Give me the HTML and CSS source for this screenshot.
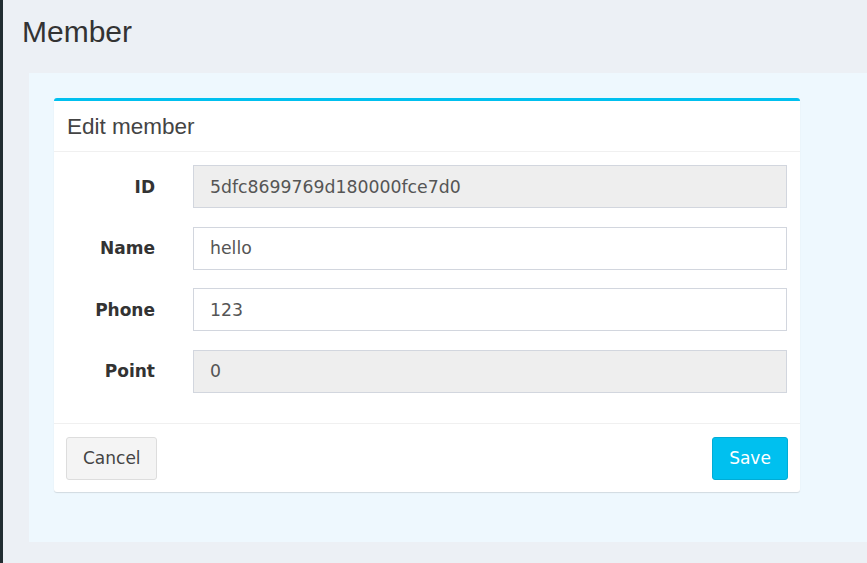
FILE: index.html
```html
<!DOCTYPE html>
<html>
<head>
<meta charset="utf-8">
<link rel="stylesheet" href="styles.css">
</head>
<body>
<div class="layout">
  <div class="sidebar"></div>
  <main class="main">
    <h1 class="page-title">Member</h1>
    <section class="content">
      <div class="card">
        <div class="card-header">Edit member</div>
        <form class="card-body">
          <div class="row">
            <label class="label">ID</label>
            <input class="field" type="text" value="5dfc8699769d180000fce7d0" disabled>
          </div>
          <div class="row">
            <label class="label">Name</label>
            <input class="field" type="text" value="hello">
          </div>
          <div class="row">
            <label class="label">Phone</label>
            <input class="field" type="text" value="123">
          </div>
          <div class="row">
            <label class="label">Point</label>
            <input class="field" type="text" value="0" disabled>
          </div>
        </form>
        <div class="card-footer">
          <button class="btn btn-default" type="button">Cancel</button>
          <button class="btn btn-primary" type="button">Save</button>
        </div>
      </div>
    </section>
  </main>
</div>
</body>
</html>
```
FILE: styles.css
```css
html, body {
  margin: 0;
  padding: 0;
  height: 100%;
  overflow: hidden;
}
body {
  background: #ecf0f5;
  font-family: "Liberation Sans", Arial, sans-serif;
  color: #333;
}
.layout {
  display: flex;
  height: 100%;
}
.sidebar {
  width: 3px;
  flex: none;
  background: #222d32;
}
.main {
  flex: 1;
  min-width: 0;
  display: flex;
  flex-direction: column;
}
.page-title {
  margin: 0;
  padding: 14px 0 0 19px;
  height: 73px;
  box-sizing: border-box;
  font-size: 30px;
  font-weight: normal;
  line-height: 36px;
  color: #333;
}
.content {
  margin-left: 26px;
  height: 469px;
  background: #eef8fe;
  padding: 25px 0 0 25px;
  box-sizing: border-box;
}
.card {
  width: 746px;
  background: #fff;
  border-top: 3px solid #00c0ef;
  border-radius: 3px;
  box-shadow: 0 1px 1px rgba(0, 0, 0, 0.12);
}
.card-header {
  height: 51px;
  box-sizing: border-box;
  padding: 12px 13px 0;
  font-size: 22.5px;
  line-height: 28px;
  color: #444;
  border-bottom: 1px solid #f0f0f0;
}
.card-body {
  margin: 0;
  padding: 13px 13px 30px 0;
  display: flex;
  flex-direction: column;
  gap: 18.5px;
  border-bottom: 1px solid #f0f0f0;
  font-family: "DejaVu Sans", Verdana, sans-serif;
}
.row {
  display: grid;
  grid-template-columns: 101px 1fr;
  column-gap: 38px;
  align-items: center;
}
.label {
  text-align: right;
  font-weight: bold;
  font-size: 17px;
  color: #333;
}
.field {
  height: 43px;
  box-sizing: border-box;
  border: 1px solid #d2d6de;
  background: #fff;
  padding: 0 16px;
  font-family: "DejaVu Sans", Verdana, sans-serif;
  font-size: 17.3px;
  color: #555;
  outline: none;
  width: 100%;
}
.field:disabled {
  background: #eee;
  color: #555;
  -webkit-text-fill-color: #555;
  opacity: 1;
}
.card-footer {
  display: flex;
  justify-content: space-between;
  padding: 13px 12px 12px 12px;
}
.btn {
  height: 43px;
  box-sizing: border-box;
  border-radius: 3px;
  font-family: "DejaVu Sans", Verdana, sans-serif;
  font-size: 17px;
  padding: 0 16px;
  cursor: pointer;
}
.btn-default {
  width: 91px;
  background: #f4f4f4;
  border: 1px solid #ddd;
  color: #444;
}
.btn-primary {
  width: 76px;
  background: #00c0ef;
  border: 1px solid #00acd6;
  color: #fff;
}
```
